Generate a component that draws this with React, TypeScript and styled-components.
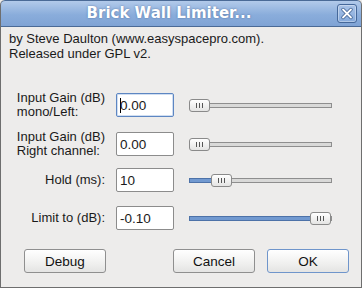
import React from 'react';
import styled, { createGlobalStyle } from 'styled-components';

const GlobalStyle = createGlobalStyle`
  html, body {
    margin: 0;
    padding: 0;
    background: #edeceb;
  }
  body {
    font-family: "Liberation Sans", Arial, sans-serif;
    font-size: 13px;
    color: #1a1a1a;
  }
`;

const Window = styled.div`
  width: 362px;
  height: 288px;
  box-sizing: border-box;
  display: flex;
  flex-direction: column;
  background: #edeceb;
  border: 1px solid #6e6e6e;
  border-top: none;
  border-radius: 5px 5px 0 0;
  overflow: hidden;
`;

const TitleBar = styled.div`
  position: relative;
  height: 27px;
  flex: none;
  box-sizing: border-box;
  margin: 0 -1px;
  padding: 0 24px 2px 0;
  display: flex;
  align-items: center;
  justify-content: center;
  border: 1px solid #4a6a96;
  border-radius: 5px 5px 0 0;
  background: linear-gradient(#b2caea, #8aaddb 55%, #7fa3d5);
  font-family: "DejaVu Sans", sans-serif;
  font-weight: bold;
  font-size: 15px;
  color: #ffffff;
  text-shadow: 0 0 2px rgba(40, 70, 120, 0.6);
`;

const CloseButton = styled.div`
  position: absolute;
  right: 4px;
  top: 3px;
  width: 20px;
  height: 19px;
  box-sizing: border-box;
  border: 1px solid #45689a;
  border-radius: 3px;
  background: linear-gradient(#a9c3e7, #86aadb);
  box-shadow: inset 0 0 0 1px rgba(255, 255, 255, 0.35);
  display: flex;
  align-items: center;
  justify-content: center;
`;

const Body = styled.div`
  flex: 1;
  display: flex;
  flex-direction: column;
  padding: 4px 0 0 0;
`;

const About = styled.div`
  padding-left: 8px;
  line-height: 15px;
`;

const Form = styled.div`
  display: flex;
  flex-direction: column;
  padding-left: 16px;
  margin-top: 30px;
`;

const Row = styled.div<{ $top: number }>`
  display: flex;
  align-items: center;
  margin-top: ${p => p.$top}px;
`;

const LabelCell = styled.div`
  width: 88px;
  display: flex;
  justify-content: flex-end;
  line-height: 14px;
`;

const LabelText = styled.div`
  text-align: left;
  white-space: nowrap;
`;

const Field = styled.div<{ $focused?: boolean }>`
  width: 58px;
  height: 24px;
  margin-left: 11px;
  box-sizing: border-box;
  border: 1px solid ${p => (p.$focused ? '#5d86c2' : '#8c8c8c')};
  border-radius: 2px;
  background: #ffffff;
  box-shadow: ${p => (p.$focused ? 'inset 0 0 0 1px rgba(120,160,215,0.35)' : 'none')};
  display: flex;
  align-items: center;
  padding-left: 3px;
  font-size: 13.5px;
`;

const Caret = styled.span`
  display: inline-block;
  width: 0;
  height: 15px;
  border-left: 1px solid #000;
  margin-right: -1px;
`;

const Slider = styled.div`
  position: relative;
  width: 143px;
  height: 13px;
  margin-left: 15px;
  display: flex;
  align-items: center;
`;

const Track = styled.div`
  width: 100%;
  height: 5px;
  box-sizing: border-box;
  border: 1px solid #8e8e8e;
  background: #d9d9d8;
  position: relative;
`;

const Fill = styled.div`
  position: absolute;
  left: -1px;
  top: -1px;
  height: 5px;
  box-sizing: border-box;
  border: 1px solid #4d72a8;
  background: #7199d0;
`;

const Thumb = styled.div`
  position: absolute;
  top: 0;
  width: 21px;
  height: 13px;
  box-sizing: border-box;
  border: 1px solid #8a8a8a;
  border-radius: 3px;
  background: linear-gradient(#ffffff, #e4e4e3);
  display: flex;
  align-items: center;
  justify-content: center;
  gap: 2px;
`;

const Grip = styled.span`
  width: 1px;
  height: 5px;
  background: #555;
`;

const ButtonRow = styled.div`
  display: flex;
  align-items: center;
  margin-top: 19px;
  padding: 0 12px 0 23px;
`;

const Button = styled.div<{ $default?: boolean }>`
  width: 82px;
  height: 24px;
  box-sizing: border-box;
  border: 1px solid ${p => (p.$default ? '#6f95cb' : '#8f8f8f')};
  border-radius: 3px;
  background: linear-gradient(#ffffff, #f0f0ef 60%, #e4e4e3);
  display: flex;
  align-items: center;
  justify-content: center;
  font-size: 13.5px;
  color: #111;
`;

const Spacer = styled.div<{ $w?: number }>`
  ${p => (p.$w ? `width: ${p.$w}px;` : 'flex: 1;')}
`;

type SliderProps = { pos: number };

function HSlider({ pos }: SliderProps) {
  return (
    <Slider>
      <Track>{pos > 0 && <Fill style={{ width: pos + 2 }} />}</Track>
      <Thumb style={{ left: pos }}>
        <Grip />
        <Grip />
        <Grip />
      </Thumb>
    </Slider>
  );
}

export default function App() {
  return (
    <>
      <GlobalStyle />
      <Window>
        <TitleBar>
          Brick Wall Limiter...
          <CloseButton>
            <svg width="14" height="13" viewBox="0 0 14 13">
              <path d="M3 2.5 L11 10.5 M11 2.5 L3 10.5" stroke="#3c5f90" strokeWidth="3.4" strokeLinecap="round" />
              <path d="M3 2.5 L11 10.5 M11 2.5 L3 10.5" stroke="#ffffff" strokeWidth="1.8" strokeLinecap="round" />
            </svg>
          </CloseButton>
        </TitleBar>
        <Body>
          <About>
            by Steve Daulton (www.easyspacepro.com).
            <br />
            Released under GPL v2.
          </About>
          <Form>
            <Row $top={0}>
              <LabelCell>
                <LabelText>
                  Input Gain (dB)
                  <br />
                  mono/Left:
                </LabelText>
              </LabelCell>
              <Field $focused>
                <Caret />
                0.00
              </Field>
              <HSlider pos={0} />
            </Row>
            <Row $top={11}>
              <LabelCell>
                <LabelText>
                  Input Gain (dB)
                  <br />
                  Right channel:
                </LabelText>
              </LabelCell>
              <Field>0.00</Field>
              <HSlider pos={0} />
            </Row>
            <Row $top={10}>
              <LabelCell>
                <LabelText>Hold (ms):</LabelText>
              </LabelCell>
              <Field>10</Field>
              <HSlider pos={22} />
            </Row>
            <Row $top={14}>
              <LabelCell>
                <LabelText>Limit to (dB):</LabelText>
              </LabelCell>
              <Field>-0.10</Field>
              <HSlider pos={121} />
            </Row>
          </Form>
          <ButtonRow>
            <Button>Debug</Button>
            <Spacer />
            <Button>Cancel</Button>
            <Spacer $w={12} />
            <Button $default>OK</Button>
          </ButtonRow>
        </Body>
      </Window>
    </>
  );
}
